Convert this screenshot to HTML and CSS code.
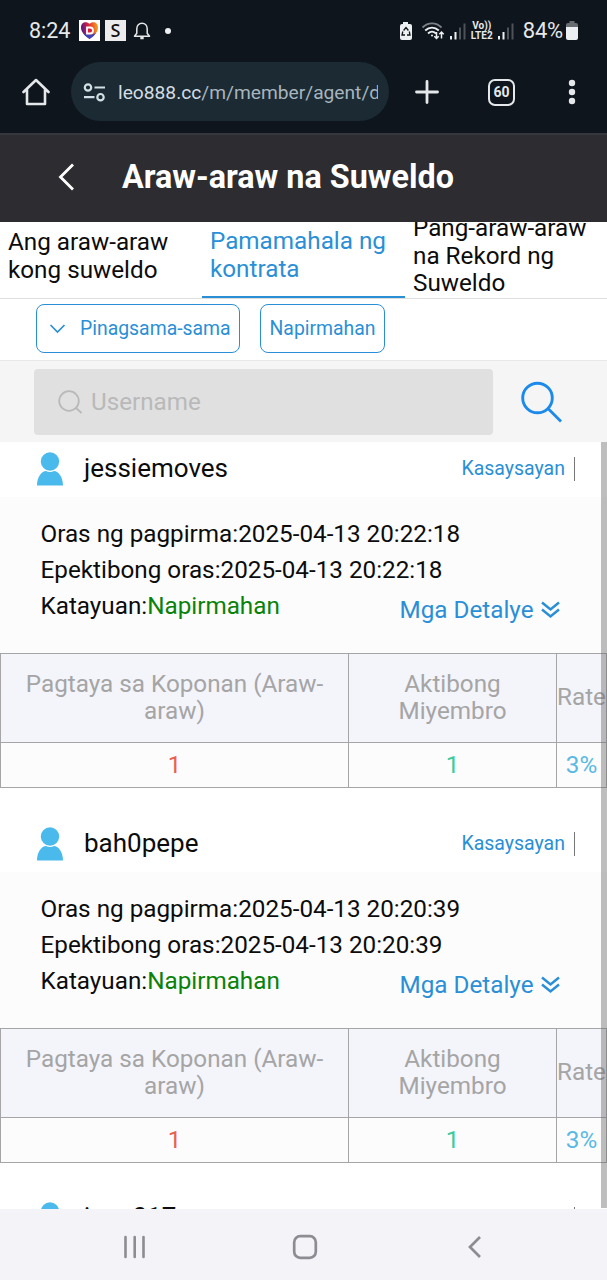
FILE: index.html
```html
<!DOCTYPE html>
<html lang="fil">
<head>
<meta charset="utf-8">
<title>Araw-araw na Suweldo</title>
<link rel="stylesheet" href="styles.css">
</head>
<body>
<div class="phone">
  <div class="chrome">
    <div class="status">
      <span class="clock">8:24</span>
      <svg class="app-icon" width="21" height="21" viewBox="0 0 21 21"><defs><linearGradient id="heart" x1="0" y1="0.3" x2="1" y2="0.2"><stop offset="0" stop-color="#4a1c8c"/><stop offset=".4" stop-color="#d8203c"/><stop offset="1" stop-color="#f9a51a"/></linearGradient></defs><rect width="21" height="21" fill="#fff"/><path d="M10.500 4C8 1 2 1.500 2 7.500c0 5.500 5 8.500 8.500 11.500C14 16 19 13 19 7.500 19 1.500 13 1 10.500 4z" fill="url(#heart)"/><path d="M4 13c2 3 4 4.500 6.500 6 2.500-1.500 5-3.500 6.500-6-4 2-9 2-13 0z" fill="#3c45b5"/><path d="M8 7.500h3a2.800 2.800 0 0 1 0 6H8z" fill="#d8203c" stroke="#fff" stroke-width="1.800"/></svg>
      <span class="s-icon">S</span>
      <svg class="bell" width="18" height="20" viewBox="0 0 18 20" fill="none" stroke="#e6e8ea" stroke-width="1.500"><path d="M1.500 15.200h15l-2.300-3V7.800C14.200 4.500 12 2.200 9 2.200S3.800 4.500 3.800 7.800v4.400z" stroke-linejoin="round"/><path d="M7.300 17h3.400" stroke-width="2.500"/></svg>
      <i class="dot"></i>
      <div class="signals">
        <svg width="14" height="20" viewBox="0 0 14 20"><path d="M4 1h5v2h2a2 2 0 0 1 2 2v12a2 2 0 0 1-2 2H3a2 2 0 0 1-2-2V5a2 2 0 0 1 2-2h1z" fill="#edf0f2"/><path d="M4.600 9.500L7 6.500l2.400 3M10.300 10.500l.7 3.500H8M6 14H3l.8-3.500" fill="none" stroke="#10151c" stroke-width="1.300"/></svg>
        <svg class="wifi" width="24" height="20" viewBox="0 0 24 20" fill="none" stroke="#edf0f2" stroke-width="1.800"><path d="M1.500 6.500c5.500-5.500 13.500-5.500 19 0" stroke="#7b8186"/><path d="M4.200 9.500c4-3.900 9.600-3.900 13.600 0M7 12.500c2.500-2.300 5.500-2.300 8 0"/><circle cx="11" cy="14.500" r="1" fill="#edf0f2" stroke="none"/><path d="M15.500 11v6.500m-2.200-2.300l2.200 2.300 2.200-2.300M20.500 17.500V11m-2.200 2.300l2.200-2.300 2.200 2.300" stroke-width="1.500"/></svg>
        <svg width="16" height="20" viewBox="0 0 16 20"><path d="M0 15h2v3.500H0zM4.500 11h2v7.500h-2z" fill="#edf0f2"/><path d="M9 6.500h2v12H9zM13.500 2.500h2v16h-2z" fill="#4d5358"/></svg>
        <span class="volte"><span>Vo))</span><span>LTE2</span></span>
        <svg width="16" height="20" viewBox="0 0 16 20"><path d="M0 15h2v3.500H0zM4.500 11h2v7.500h-2z" fill="#edf0f2"/><path d="M9 6.500h2v12H9zM13.500 2.500h2v16h-2z" fill="#4d5358"/></svg>
        <span class="percent">84%</span>
        <svg class="battery" width="12" height="19" viewBox="0 0 12 19"><path d="M3.500 0h5v2H10a2 2 0 0 1 2 2v2H0V4a2 2 0 0 1 2-2h1.500z" fill="#686d72"/><path d="M0 6h12v11a2 2 0 0 1-2 2H2a2 2 0 0 1-2-2z" fill="#edf0f2"/></svg>
      </div>
    </div>
    <div class="browser">
      <svg class="home" width="28" height="28" viewBox="0 0 28 28" fill="none" stroke="#e4e8ea" stroke-width="2.600" stroke-linejoin="round"><path d="M1.500 14L14 2l12.500 12M5 11v15h18V11" stroke-linecap="round"/></svg>
      <div class="omnibox">
        <svg width="23" height="19" viewBox="0 0 23 19" fill="none" stroke="#d3e0e5" stroke-width="2.200"><circle cx="5" cy="4.500" r="3.200"/><path d="M11.500 4.500H22M1 14.200h10.500"/><circle cx="17.500" cy="14.200" r="3.200"/></svg>
        <span class="url"><b>leo888.cc</b>/m/member/agent/d</span>
      </div>
      <svg class="plus" width="24" height="24" viewBox="0 0 24 24"><path d="M12 1.500v21M1.500 12h21" stroke="#e4e8ea" stroke-width="2.800" stroke-linecap="round"/></svg>
      <span class="tab-count">60</span>
      <svg class="more" width="8" height="26" viewBox="0 0 8 26" fill="#e4e8ea"><circle cx="4" cy="4" r="3.200"/><circle cx="4" cy="13" r="3.200"/><circle cx="4" cy="22" r="3.200"/></svg>
    </div>
  </div>
  <header class="titlebar">
    <svg width="18" height="28" viewBox="0 0 18 28" fill="none" stroke="#fff" stroke-width="2.800"><path d="M16 1.500L3.500 14 16 26.500"/></svg>
    <h1>Araw-araw na Suweldo</h1>
  </header>
  <nav class="tabs">
    <a class="tab">Ang araw-araw<br>kong suweldo</a>
    <a class="tab active">Pamamahala ng<br>kontrata</a>
    <a class="tab">Pang-araw-araw<br>na Rekord ng<br>Suweldo</a>
  </nav>
  <div class="filters">
    <span class="pill wide"><svg width="17" height="10" viewBox="0 0 17 10" fill="none" stroke="#2a8fd6" stroke-width="1.700"><path d="M1.500 1l7 7 7-7"/></svg>Pinagsama-sama</span>
    <span class="pill">Napirmahan</span>
  </div>
  <div class="search">
    <div class="field"><svg width="25" height="24" viewBox="0 0 25 24" fill="none" stroke="#b9b9b9" stroke-width="1.800"><circle cx="11" cy="11" r="9.800"/><path d="M17.500 17.500l6 5.500"/></svg>Username</div>
    <svg width="42" height="42" viewBox="0 0 42 42" fill="none" stroke="#1c8aea" stroke-width="2.900"><circle cx="17.500" cy="17" r="14.800"/><path d="M28 27.500L41 40.500"/></svg>
  </div>
  <main class="list">
    <section class="card">
      <div class="person"><svg width="28" height="34" viewBox="0 0 28 34" fill="#4ab9ec"><circle cx="14" cy="9.500" r="9.200"/><path d="M1 33.500c0-9 5-14.500 9-14.500 2.500 1.200 5.500 1.200 8 0 4 0 9 5.500 9 14.500z"/></svg><span class="name">jessiemoves</span><a class="history">Kasaysayan</a></div>
      <div class="info">
        <p>Oras ng pagpirma:2025-04-13 20:22:18</p>
        <p>Epektibong oras:2025-04-13 20:22:18</p>
        <p>Katayuan:<span class="signed">Napirmahan</span></p>
        <a class="details">Mga Detalye<svg width="19" height="18" viewBox="0 0 19 18" fill="none" stroke="#2a8fd6" stroke-width="2.500"><path d="M1 1.500l8.500 7 8.500-7M1 8.500l8.500 7 8.500-7"/></svg></a>
      </div>
      <table>
        <tr><th class="c1">Pagtaya sa Koponan (Araw-<br>araw)</th><th class="c2">Aktibong<br>Miyembro</th><th class="c3">Rate</th></tr>
        <tr><td class="red">1</td><td class="green">1</td><td class="blue">3%</td></tr>
      </table>
    </section>
    <section class="card">
      <div class="person"><svg width="28" height="34" viewBox="0 0 28 34" fill="#4ab9ec"><circle cx="14" cy="9.500" r="9.200"/><path d="M1 33.500c0-9 5-14.500 9-14.500 2.500 1.200 5.500 1.200 8 0 4 0 9 5.500 9 14.500z"/></svg><span class="name">bah0pepe</span><a class="history">Kasaysayan</a></div>
      <div class="info">
        <p>Oras ng pagpirma:2025-04-13 20:20:39</p>
        <p>Epektibong oras:2025-04-13 20:20:39</p>
        <p>Katayuan:<span class="signed">Napirmahan</span></p>
        <a class="details">Mga Detalye<svg width="19" height="18" viewBox="0 0 19 18" fill="none" stroke="#2a8fd6" stroke-width="2.500"><path d="M1 1.500l8.500 7 8.500-7M1 8.500l8.500 7 8.500-7"/></svg></a>
      </div>
      <table>
        <tr><th class="c1">Pagtaya sa Koponan (Araw-<br>araw)</th><th class="c2">Aktibong<br>Miyembro</th><th class="c3">Rate</th></tr>
        <tr><td class="red">1</td><td class="green">1</td><td class="blue">3%</td></tr>
      </table>
    </section>
    <section class="card last">
      <div class="person"><svg width="28" height="34" viewBox="0 0 28 34" fill="#4ab9ec"><circle cx="14" cy="9.500" r="9.200"/><path d="M1 33.500c0-9 5-14.500 9-14.500 2.500 1.200 5.500 1.200 8 0 4 0 9 5.500 9 14.500z"/></svg><span class="name">jean017</span><a class="history">Kasaysayan</a></div>
    </section>
    <div class="scrollbar"></div>
  </main>
  <footer class="navbar">
    <svg width="24" height="24" viewBox="0 0 24 24"><path d="M2.500 2v20M11.700 2v20M20.500 2v20" stroke="#8d8c92" stroke-width="2.600" stroke-linecap="round"/></svg>
    <svg class="home-key" width="26" height="26" viewBox="0 0 26 26"><rect x="2.200" y="2.200" width="21.600" height="21.600" rx="6" fill="none" stroke="#8d8c92" stroke-width="2.700"/></svg>
    <svg width="16" height="24" viewBox="0 0 16 24"><path d="M13 2L3 12l10 10" fill="none" stroke="#8d8c92" stroke-width="2.700"/></svg>
  </footer>
</div>
</body>
</html>
```
FILE: styles.css
```css
* { box-sizing: border-box; }
body { margin: 0; font-family: Roboto, "Liberation Sans", sans-serif; color: #0c0c0c; background: #fff; }
svg { display: block; flex: none; }
.phone { width: 607px; height: 1280px; overflow: hidden; display: flex; flex-direction: column; }
.phone > * { flex: none; }

.chrome { height: 135px; background: #0f151c; border-bottom: 2px solid #34383e; }
.status { height: 61px; padding-left: 29px; padding-right: 29px; display: flex; align-items: center; color: #e6e8ea; }
.clock { width: 50px; font-size: 21.500px; }
.s-icon { width: 21px; height: 21px; margin-left: 5px; background: #ececec; color: #111; font: 500 18px/21px "Noto Sans", sans-serif; text-align: center; }
.bell { margin-left: 7px; }
.dot { width: 6px; height: 6px; margin-left: 14px; border-radius: 50%; background: #edf0f2; }
.signals { margin-left: auto; display: flex; align-items: center; gap: 7px; }
.wifi { margin-left: 1px; margin-right: -2px; }
.volte { width: 24px; height: 20px; margin-left: -3px; margin-right: -3px; display: flex; flex-direction: column; justify-content: space-between; align-items: center; font: 700 10px/10px Roboto, sans-serif; white-space: nowrap; }
.percent { margin-left: 2px; margin-right: -4px; font-size: 22px; letter-spacing: -.2px; }

.browser { height: 62px; display: flex; align-items: center; }
.home { margin-left: 22px; }
.omnibox { width: 318px; height: 59px; margin-left: 21px; margin-bottom: 1px; padding: 1px 11px 0 12px; border-radius: 30px; background: #1b2a33; display: flex; align-items: center; gap: 12px; }
.url { flex: 1; overflow: hidden; white-space: nowrap; font-size: 19.200px; color: #a7b5bd; }
.url b { font-weight: 400; color: #d3dde2; }
.plus { margin-left: 26px; }
.tab-count { width: 27px; height: 27px; margin-left: 49px; border: 2.500px solid #e4e8ea; border-radius: 7px; color: #e4e8ea; font-size: 14px; font-weight: 700; line-height: 23px; text-align: center; }
.more { margin-left: 53px; }

.titlebar { height: 87px; padding: 0 0 3px 57px; background: #2d2c31; display: flex; align-items: center; gap: 47px; }
h1 { margin: 0; color: #fff; font-size: 32.300px; font-weight: 700; }

.tabs { height: 77px; display: grid; grid-template-columns: 202px 203px 202px; overflow: hidden; border-bottom: 1px solid #dedede; }
.tab { display: flex; align-items: center; padding: 0 8px 8px; font-size: 24.250px; line-height: 27.500px; white-space: nowrap; height: 77px; }
.tab.active { padding-bottom: 7px; color: #2a8fd6; border-bottom: 3px solid #2a8fd6; }

.filters { height: 61px; padding: 5px 36px 0; display: flex; gap: 20px; }
.pill { width: 125px; height: 49px; padding: 0 8.500px; border: 1px solid #2a8fd6; border-radius: 8px; color: #2a8fd6; display: flex; align-items: center; font-size: 19.400px; white-space: nowrap; }
.pill.wide { width: 204px; padding-left: 12px; gap: 14px; }
.search { height: 82px; padding: 0 45px 0 34px; border-top: 1px solid #e8e8e8; background: #f5f5f5; display: flex; align-items: center; justify-content: space-between; }
.field { width: 459px; height: 66px; padding-left: 24px; border-radius: 4px; background: #e0e0e0; color: #b9b9b9; display: flex; align-items: center; gap: 8px; font-size: 24.200px; }

.list { position: relative; height: 767px; overflow: hidden; }
.card { height: 375px; }
.person { height: 55px; padding: 0 32px 1px 36px; display: flex; align-items: center; }
.name { margin-left: 20px; padding-bottom: 2px; font-size: 26px; }
.history { margin-left: auto; height: 24px; padding-right: 9px; border-right: 1px solid #777; color: #2a8fd6; font-size: 19.500px; line-height: 24px; }
.info { position: relative; height: 156px; padding: 19px 40.500px; background: #fcfcfc; }
.info p { margin: 0; font-size: 24.250px; line-height: 36px; white-space: nowrap; }
.signed { color: #098209; }
.details { position: absolute; right: 47.500px; top: 95px; display: flex; align-items: center; gap: 7px; color: #2a8fd6; font-size: 24.250px; line-height: 36px; }
table { width: 607px; table-layout: fixed; border-collapse: collapse; font-size: 24.250px; line-height: 27.500px; }
th, td { padding: 0; border: 1px solid #a5a5a8; text-align: center; font-weight: 400; }
th { height: 89px; background: #f4f4fb; color: #a5a5a5; white-space: nowrap; }
td { height: 45px; padding-top: 1px; background: #fcfcfc; }
.c1 { width: 348px; }
.c2 { width: 208px; }
.red { color: #e9604f; }
.green { color: #3fcb9d; }
.blue { color: #58b9e5; }
.last .name { padding-bottom: 4px; }
.scrollbar { position: absolute; top: 0; right: 0; width: 6px; height: 766px; background: rgba(110, 110, 110, .45); }

.navbar { height: 71px; padding: 4px 124px 0 123px; background: #f3f3f8; display: flex; align-items: center; justify-content: space-between; }
.home-key { margin-right: 5px; }
```
